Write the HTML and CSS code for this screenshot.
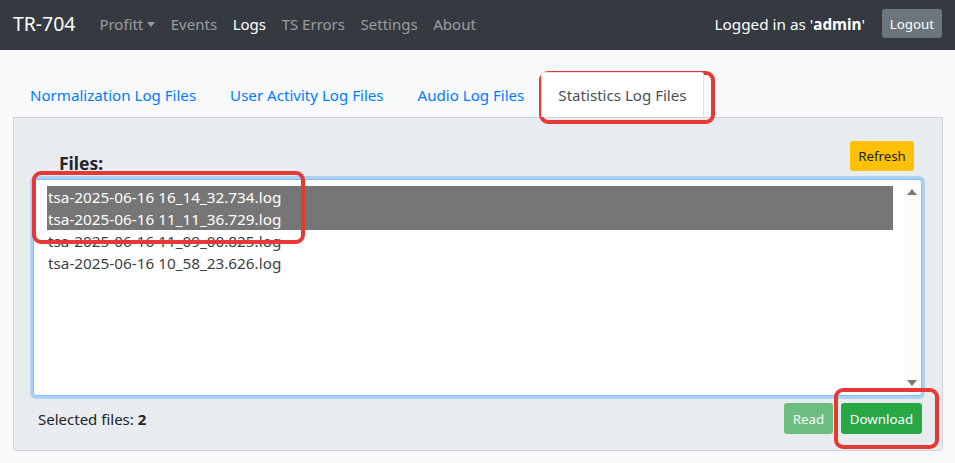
FILE: index.html
```html
<!DOCTYPE html>
<html>
<head>
<meta charset="utf-8">
<link rel="stylesheet" href="styles.css">
</head>
<body>
<nav class="navbar">
  <span class="brand">TR-704</span>
  <ul class="nav-links">
    <li class="nav-link">Profitt <span class="caret"></span></li>
    <li class="nav-link">Events</li>
    <li class="nav-link active">Logs</li>
    <li class="nav-link">TS Errors</li>
    <li class="nav-link">Settings</li>
    <li class="nav-link">About</li>
  </ul>
  <div class="user">
    <span class="user-text">Logged in as '<b>admin</b>'</span>
    <button class="btn btn-secondary">Logout</button>
  </div>
</nav>
<main class="main">
  <ul class="tabs">
    <li class="tab">Normalization Log Files</li>
    <li class="tab">User Activity Log Files</li>
    <li class="tab">Audio Log Files</li>
    <li class="tab tab-active">Statistics Log Files</li>
  </ul>
  <section class="panel">
    <div class="panel-head">
      <h2 class="files-title">Files:</h2>
      <button class="btn btn-warning">Refresh</button>
    </div>
    <div class="listbox">
      <ul class="options">
        <li class="option selected">tsa-2025-06-16 16_14_32.734.log</li>
        <li class="option selected">tsa-2025-06-16 11_11_36.729.log</li>
        <li class="option">tsa-2025-06-16 11_09_00.825.log</li>
        <li class="option">tsa-2025-06-16 10_58_23.626.log</li>
      </ul>
      <div class="scrollbar">
        <span class="arrow up"></span>
        <span class="arrow down"></span>
      </div>
    </div>
    <div class="panel-foot">
      <span class="selected-count">Selected files: <b>2</b></span>
      <div class="actions">
        <button class="btn btn-success btn-read disabled">Read</button>
        <button class="btn btn-success btn-download">Download</button>
      </div>
    </div>
  </section>
</main>
<div class="mark mark-tab"></div>
<div class="mark mark-files"></div>
<div class="mark mark-download"></div>
</body>
</html>
```

FILE: styles.css
```css
* { box-sizing: border-box; }
html, body {
  margin: 0;
  padding: 0;
  background: #f8f9fa;
  font-family: "Noto Sans", "Open Sans", sans-serif;
  color: #212529;
  width: 955px;
  height: 463px;
  overflow: hidden;
}
ul { list-style: none; margin: 0; padding: 0; }
button { font-family: inherit; }

.navbar {
  height: 50px;
  background: #343a40;
  display: flex;
  align-items: center;
  padding: 0 13px 3px 13px;
}
.brand {
  color: #fff;
  font-size: 19.4px;
  margin-right: 16px;
}
.nav-links { display: flex; }
.nav-link {
  color: rgba(255,255,255,.5);
  font-size: 15px;
  padding: 0 7.8px;
}
.nav-link:first-child { padding-left: 8px; }
.nav-link.active { color: #fff; }
.caret {
  display: inline-block;
  vertical-align: 3px;
  border-top: 5px solid rgba(255,255,255,.5);
  border-left: 4px solid transparent;
  border-right: 4px solid transparent;
  margin-left: 0;
}
.user {
  margin-left: auto;
  display: flex;
  align-items: center;
  gap: 17px;
}
.user-text { color: #fff; font-size: 15.3px; }
.btn {
  border: none;
  border-radius: 3px;
  font-size: 13.3px;
  height: 30px;
  padding: 0 9px;
  color: #fff;
  cursor: pointer;
}
.btn-secondary { background: #6c757d; color: #fff; height: 29px; width: 60px; padding: 0; }
.btn-warning { background: #ffc107; color: #212529; width: 64px; padding: 0; }
.btn-success { background: #28a745; height: 31px; padding: 0; }
.btn-read { width: 49px; }
.btn-download { width: 81px; }
.btn-success.disabled { opacity: .65; }

.main { padding: 22px 12px 0 13px; }
.tabs { display: flex; }
.tab {
  font-size: 15.1px;
  color: #007bff;
  padding: 0 16px;
  height: 45px;
  line-height: 45px;
  border: 1px solid transparent;
  border-bottom: none;
}
.tab-active {
  background: #fff;
  color: #495057;
  border-color: #dee2e6;
  border-radius: 3px 3px 0 0;
  margin-bottom: -1px;
  position: relative;
  z-index: 1;
}
.panel {
  background: #e9ecef;
  border: 1px solid #ced4da;
  border-radius: 0 0 4px 4px;
  height: 334px;
  padding: 0 20px 16px 19px;
  display: flex;
  flex-direction: column;
}
.panel-head {
  display: flex;
  align-items: flex-end;
  justify-content: space-between;
  height: 61px;
  padding: 0 8px 8px 26px;
}
.files-title {
  margin: 0 0 -4px 0;
  font-size: 17.5px;
  font-weight: bold;
}
.listbox {
  height: 218px;
  background: #fff;
  border: 1px solid #80bdff;
  box-shadow: 0 0 0 3px rgba(0,123,255,.25);
  border-radius: 3px;
  display: flex;
  padding: 6px 0 0 13px;
}
.options { flex: 1; padding-right: 11px; }
.option {
  font-size: 15.3px;
  height: 22px;
  line-height: 22px;
  padding-left: 1px;
  color: #3d4246;
}
.option.selected { background: #767676; color: #fff; }
.scrollbar {
  width: 16px;
  margin: -6px 1px 0 0;
  background: #fcfcfc;
  position: relative;
}
.arrow {
  position: absolute;
  left: 3px;
  border-left: 5px solid transparent;
  border-right: 5px solid transparent;
}
.arrow.up { top: 9px; border-bottom: 6px solid #7a7a7a; }
.arrow.down { bottom: 9px; border-top: 6px solid #7a7a7a; }
.panel-foot {
  display: flex;
  align-items: center;
  justify-content: space-between;
  margin-top: 7px;
  padding-left: 5px;
}
.selected-count { font-size: 15px; }
.actions { display: flex; gap: 8px; }

.mark {
  position: absolute;
  border: 4px solid #e53935;
  border-radius: 9px;
}
.mark-tab { left: 539px; top: 71px; width: 176px; height: 53px; }
.mark-files { left: 32px; top: 171px; width: 273px; height: 73px; }
.mark-download { left: 834px; top: 388px; width: 105px; height: 61px; }
```
